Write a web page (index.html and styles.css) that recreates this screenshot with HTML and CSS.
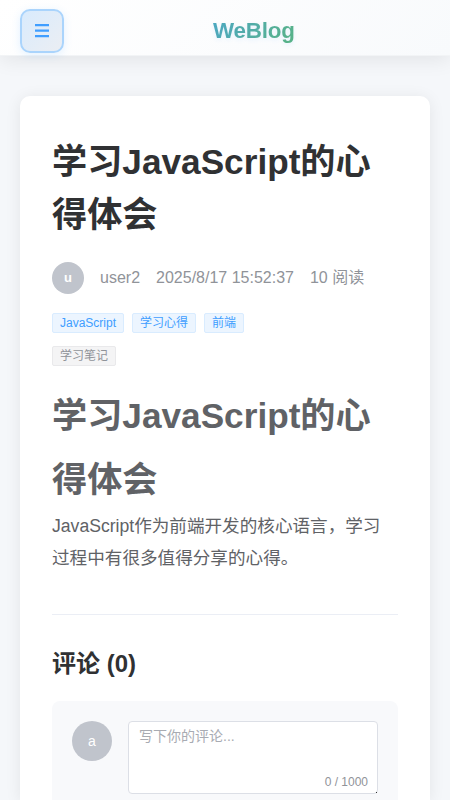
FILE: index.html
```html
<!DOCTYPE html>
<html lang="zh-CN">
<head>
<meta charset="UTF-8">
<title>WeBlog</title>
<link rel="stylesheet" href="styles.css">
</head>
<body>
<header class="header">
  <button class="menu" aria-label="菜单"><svg width="14" height="14" viewBox="0 0 14 14"><path d="M0 1.2h14M0 6.7h14M0 12.2h14"/></svg></button>
  <div class="logo">WeBlog</div>
</header>
<main class="card">
  <h1 class="title">学习JavaScript的心得体会</h1>
  <div class="meta"><span class="avatar small">u</span><span>user2</span><span>2025/8/17 15:52:37</span><span class="views">10 阅读</span></div>
  <div class="tags"><span class="tag">JavaScript</span><span class="tag">学习心得</span><span class="tag">前端</span></div>
  <div class="tags second"><span class="tag info">学习笔记</span></div>
  <article class="content">
    <h1>学习JavaScript的心得体会</h1>
    <p>JavaScript作为前端开发的核心语言，学习过程中有很多值得分享的心得。</p>
  </article>
  <section class="comments">
    <h3>评论 (0)</h3>
    <div class="form">
      <span class="avatar">a</span>
      <div class="field"><textarea placeholder="写下你的评论..."></textarea><span class="count">0 / 1000</span></div>
    </div>
  </section>
</main>
</body>
</html>
```

FILE: styles.css
```css
* { box-sizing: border-box; }
html { height: 100%; overflow: hidden; }
body {
  display: flex;
  flex-direction: column;
  margin: 0;
  height: 800px;
  overflow: hidden;
  background: #f5f7fa;
  color: #2c3e50;
  font-family: "Liberation Sans", "Noto Sans CJK SC", sans-serif;
}
.header {
  position: relative;
  display: flex;
  flex: none;
  align-items: center;
  height: 56px;
  padding: 6px 20px 0;
  background: linear-gradient(135deg, #ffffff, #f8fafc);
  border-bottom: 1px solid #f2f4f6;
  box-shadow: 0 4px 20px rgba(0, 0, 0, .08);
}
.menu {
  display: flex;
  align-items: center;
  justify-content: center;
  flex: none;
  width: 44px;
  height: 44px;
  padding: 0;
  border: 2px solid #aad4fc;
  border-radius: 10px;
  background: linear-gradient(135deg, #d9ebfd, #ebeef3);
  box-shadow: 0 2px 8px rgba(64, 158, 255, .15);
}
.menu svg { stroke: #409eff; stroke-width: 2.3; }
.logo {
  margin-left: 149px;
  font-size: 22.4px;
  font-weight: 700;
  line-height: 30px;
  letter-spacing: -.2px;
  background: linear-gradient(135deg, #4da8c4, #5bb57c);
  background-clip: text;
  -webkit-background-clip: text;
  color: transparent;
  text-shadow: 0 2px 4px rgba(64, 158, 255, .1);
}
.card {
  flex: 1;
  overflow: hidden;
  margin: 40px 20px 0;
  padding: 39px 32px 0;
  min-height: 0;
  background: #fff;
  border-radius: 10px 10px 0 0;
  box-shadow: 0 2px 16px rgba(0, 0, 0, .08);
}
.title {
  margin: 0 0 21px;
  font-size: 35.2px;
  line-height: 53px;
  color: #303133;
}
.meta {
  display: flex;
  align-items: center;
  gap: 16px;
  height: 32px;
  font-size: 16px;
  line-height: 24px;
  color: #909399;
  white-space: nowrap;
}
.avatar {
  display: flex;
  align-items: center;
  justify-content: center;
  flex: none;
  width: 40px;
  height: 40px;
  border-radius: 50%;
  background: #c0c4cc;
  color: #fff;
  font-size: 14px;
}
.small { width: 32px; height: 32px; font-size: 13px; font-weight: 700; }
.tags { display: flex; gap: 8px; margin-top: 19px; }
.second { margin-top: 13px; }
.tag {
  height: 20px;
  padding: 0 7px;
  border: 1px solid #d9ecff;
  border-radius: 2px;
  background: #ecf5ff;
  color: #409eff;
  font-size: 12px;
  line-height: 18px;
}
.info { border-color: #e9e9eb; background: #f4f4f5; color: #909399; }
.content { margin-top: 18px; color: #606266; font-size: 17.6px; line-height: 32px; }
.content h1 { margin: 0; font-size: 35.2px; line-height: 63.5px; }
.content p { margin: -1px 0 0; }
.comments { margin-top: 40px; padding-top: 33px; border-top: 1px solid #ebeef5; }
.comments h3 { margin: 0 0 21px; font-size: 24px; line-height: 32px; color: #303133; }
.form { display: flex; gap: 16px; height: 190px; padding: 20px; border-radius: 8px; background: #f8f9fb; }
.field { position: relative; flex: 1; height: 73px; }
.field::after {
  content: "";
  position: absolute;
  right: 1px;
  bottom: 1px;
  width: 1px;
  height: 1px;
  background: #303133;
}
textarea {
  display: block;
  width: 100%;
  height: 73px;
  padding: 4px 10px;
  border: 1px solid #dcdfe6;
  border-radius: 4px;
  background: #fff;
  font: 14px/21px "Liberation Sans", "Noto Sans CJK SC", sans-serif;
  resize: none;
}
textarea::placeholder { color: #a8abb2; }
.count { position: absolute; right: 10px; bottom: 5px; color: #909399; font-size: 12px; line-height: 14px; }
```
